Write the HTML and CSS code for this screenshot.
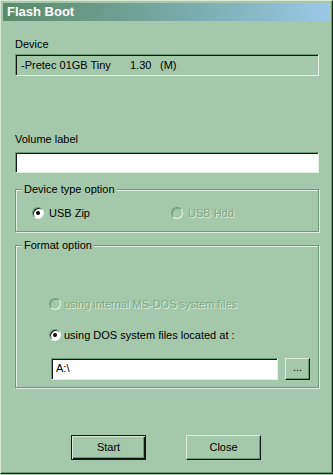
FILE: index.html
```html
<!DOCTYPE html>
<html lang="en">
<head>
    <meta charset="UTF-8">
    <title>Flash Boot</title>
    <link rel="stylesheet" href="styles.css">
</head>
<body>
    <div class="window">
        <div class="titlebar">Flash Boot</div>

        <div class="content">
            <div class="label label-device">Device</div>
            <div class="device-box">
                <span class="dev-name">-Pretec 01GB Tiny</span>
                <span class="dev-rev">1.30</span>
                <span>(M)</span>
            </div>

            <div class="label label-volume">Volume label</div>
            <div class="textbox"></div>

            <fieldset class="group group-type">
                <legend>Device type option</legend>
                <div class="radio-row type-row">
                    <label class="radio-item zip">
                        <span class="radio checked"></span>USB Zip
                    </label>
                    <label class="radio-item disabled">
                        <span class="radio"></span>USB Hdd
                    </label>
                </div>
            </fieldset>

            <fieldset class="group group-format">
                <legend>Format option</legend>
                <label class="radio-item disabled fmt-first">
                    <span class="radio"></span>using internal MS-DOS system files
                </label>
                <label class="radio-item fmt-second">
                    <span class="radio checked"></span>using DOS system files located at :
                </label>
                <div class="path-row">
                    <div class="textbox path">A:\</div>
                    <div class="btn btn-browse">...</div>
                </div>
            </fieldset>

            <div class="buttons">
                <div class="btn btn-default">Start</div>
                <div class="btn">Close</div>
            </div>
        </div>
    </div>
</body>
</html>
```

FILE: styles.css
```css
body {
    margin: 0;
    background-color: #a4c8ab;
    font-family: "Liberation Sans", Arial, sans-serif;
    font-size: 11px;
    line-height: 13px;
    color: #000;
}
.window {
    box-sizing: border-box;
    width: 333px;
    height: 474px;
    padding: 2px;
    border: 1px solid;
    border-color: #d6ead6 #1a281c #1a281c #d6ead6;
    box-shadow: inset -1px -1px 0 #6d9a76;
}
.titlebar {
    height: 18px;
    line-height: 18px;
    padding-left: 4px;
    color: #fff;
    font-size: 13px;
    font-weight: bold;
    background: linear-gradient(to right, #5a8b68, #7cadb0 60%, #9cc8e8);
}
.content {
    padding: 0 11px 0 12px;
}
.label-device {
    margin-top: 17px;
}
.device-box {
    box-sizing: border-box;
    height: 22px;
    margin-top: 3px;
    padding-left: 5px;
    display: flex;
    align-items: center;
    border: 1px solid;
    border-color: #6d9a76 #e2f1e2 #e2f1e2 #6d9a76;
    box-shadow: inset 1px 1px 0 #101a12;
}
.dev-name {
    width: 109px;
}
.dev-rev {
    width: 30px;
}
.label-volume {
    margin-top: 57px;
}
.textbox {
    box-sizing: border-box;
    height: 21px;
    margin-top: 6px;
    background-color: #fff;
    border: 1px solid;
    border-color: #6d9a76 #e2f1e2 #e2f1e2 #6d9a76;
    box-shadow: inset 1px 1px 0 #101a12;
}
.group {
    margin: 0;
    padding: 0 6px;
    min-inline-size: 0;
    border: 1px solid #6d9a76;
    box-shadow: inset 1px 1px 0 #e0f0e0, 1px 1px 0 #e0f0e0;
}
.group legend {
    padding: 0 2px;
    background-color: #a4c8ab;
}
.group-type {
    margin-top: 10px;
    padding-bottom: 11px;
}
.type-row {
    display: flex;
    margin-top: 10px;
    margin-left: 10px;
}
.radio-item {
    display: flex;
    align-items: center;
    gap: 5px;
    height: 14px;
}
.radio-item.zip {
    width: 139px;
}
.radio {
    box-sizing: border-box;
    width: 12px;
    height: 12px;
    border-radius: 50%;
    background-color: #fff;
    border: 1px solid;
    border-color: #6d9a76 #e8f4e8 #e8f4e8 #6d9a76;
    box-shadow: inset 1px 1px 0 #101a12;
    display: flex;
    align-items: center;
    justify-content: center;
}
.radio.checked::after {
    content: "";
    width: 4px;
    height: 4px;
    border-radius: 50%;
    background-color: #000;
}
.radio-item.disabled {
    color: #7ea887;
    text-shadow: 1px 1px 0 #dcecdc;
}
.radio-item.disabled .radio {
    background-color: #a4c8ab;
    box-shadow: inset 1px 1px 0 #7ea887;
}
.group-format {
    margin-top: 7px;
    padding-bottom: 7px;
}
.fmt-first {
    margin-top: 45px;
    margin-left: 27px;
    gap: 3px;
}
.fmt-second {
    margin-top: 17px;
    margin-left: 27px;
    gap: 3px;
}
.path-row {
    display: flex;
    align-items: center;
    gap: 7px;
    margin-top: 16px;
    margin-left: 29px;
}
.textbox.path {
    width: 227px;
    height: 22px;
    margin-top: 0;
    padding-left: 4px;
    line-height: 19px;
}
.btn {
    box-sizing: border-box;
    width: 75px;
    height: 25px;
    display: flex;
    align-items: center;
    justify-content: center;
    border: 1px solid;
    border-color: #d8ecd8 #101a12 #101a12 #d8ecd8;
    box-shadow: inset -1px -1px 0 #6d9a76;
}
.btn-browse {
    width: 25px;
    height: 22px;
    padding-bottom: 3px;
}
.btn-default {
    border-color: #101a12;
    box-shadow: inset 1px 1px 0 #d8ecd8, inset -1px -1px 0 #101a12, inset -2px -2px 0 #6d9a76;
}
.buttons {
    display: flex;
    gap: 40px;
    margin-top: 47px;
    margin-left: 56px;
}
```
